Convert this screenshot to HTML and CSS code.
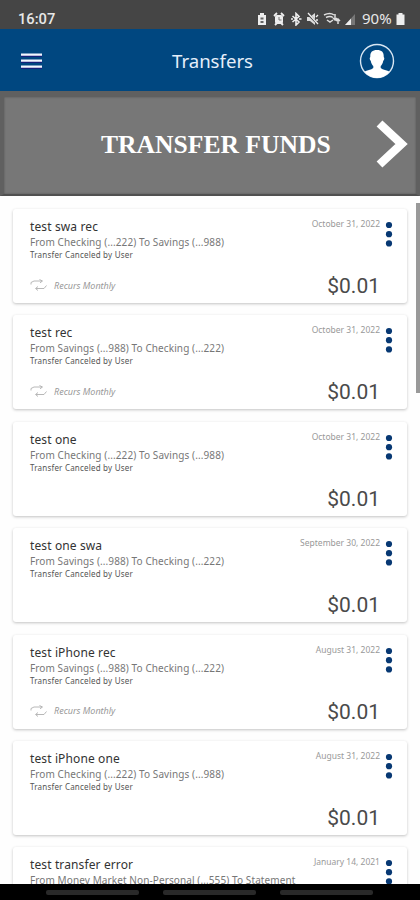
FILE: index.html
```
<!DOCTYPE html>
<html lang="en">
<head>
<meta charset="utf-8">
<title>Transfers</title>
<link rel="stylesheet" href="styles.css">
</head>
<body>
<svg class="defs" aria-hidden="true">
  <symbol id="recur" viewBox="0 0 18 12"><path d="M1 5.500V3.500L4 2h8M9.500 .5 12.500 2 10 3.800M16.500 6.500 14 9.500H6M8 7.500 5.500 9.500 8 11.500" fill="none" stroke="#b0b0b0" stroke-width=".9"/></symbol>
  <symbol id="dots" viewBox="0 0 8 26"><g fill="#073873"><circle cx="4" cy="4" r="3.100"/><circle cx="4" cy="13.200" r="3.100"/><circle cx="4" cy="22.400" r="3.100"/></g></symbol>
</svg>
<div class="screen">
  <div class="status">
    <span class="time">16:07</span>
    <svg class="status-icons" width="100" height="14" viewBox="0 0 100 14">
      <path d="M1 3h2V1h4v2h2v10H1z" fill="#eee"/><path d="M3.500 5.500h3v2h-3zM3.500 9h3v2h-3z" fill="#666"/>
      <rect x="18" y="3" width="8" height="9" rx="2" fill="#eee"/><path d="M17 4 20 1M27 4 24 1M18 13l2-2M26 13l-2-2" stroke="#eee" stroke-width="1.800"/><path d="M22 5v3h2.500" fill="none" stroke="#777"/>
      <path d="M35.500 4 42 10l-3 3V1.500L42 4.500 35.500 10M34 7h2M42 7h2.500" fill="none" stroke="#eee" stroke-width="1.600"/>
      <path d="M50 5h3l5-4v12l-5-4h-3z" fill="#ddd"/><path d="M50 1 61 12" stroke="#454545" stroke-width="2.400"/><path d="M51 1 61 12M59 5l2-2M59 8h2" stroke="#eee" stroke-width="1.300"/>
      <path d="M67 3q6-3 10 0M69 5.500q4-2 7 0M70 8l3 2 3-2M78 2v6M76 6l2 2 2-2M81 12V7M79 9l2-2 2 2" fill="none" stroke="#ddd" stroke-width="1.500"/>
      <path d="M88 13 98 2v11z" fill="#777"/><path d="M88 13l6-6.500V13z" fill="#eee"/>
    </svg>
    <span class="percent">90%</span>
    <svg class="battery" width="9" height="12" viewBox="0 0 9 12"><path d="M2.500 0h4v1.500H8.500V12H.5V1.500h2z" fill="#eee"/></svg>
  </div>
  <header class="header">
    <svg class="menu" width="21" height="16" viewBox="0 0 21 16"><path d="M0 3h21M0 9h21M0 15h21" stroke="#15207a" stroke-width="2"/><path d="M0 1.600h21M0 7.600h21M0 13.600h21" stroke="#f2f6ff" stroke-width="2.400"/></svg>
    <h1>Transfers</h1>
    <svg class="avatar" width="36" height="36" viewBox="0 0 36 36"><circle cx="18" cy="18" r="16.500" fill="none" stroke="#d8e6f2" stroke-width="1.400"/><path d="M18 7c5 0 7 2.500 6.700 7 1 1 .7 3-.5 4-.4 2.500-1.500 4-2.500 5v2c2 2 6.500 2 9 3.700A16 16 0 0 1 5.300 28.700c2.500-1.700 7-1.700 9-3.700v-2c-1-1-2.100-2.500-2.500-5-1.200-1-1.500-3-.5-4C11 9.500 13 7 18 7z" fill="#fff"/></svg>
  </header>
  <div class="banner">
    <span>TRANSFER FUNDS</span>
    <svg class="chevron" width="32" height="48" viewBox="0 0 32 48"><path d="M3.500 3.500 25.500 24 3.500 44.500" fill="none" stroke="#fff" stroke-width="8.500"/></svg>
  </div>
  <main class="list">
    <article class="card"><div class="info"><h2>test swa rec</h2><p class="route">From Checking (...222) To Savings (...988)</p><p class="state">Transfer Canceled by User</p><div class="recurs"><svg><use href="#recur"/></svg>Recurs Monthly</div></div><div class="side"><time>October 31, 2022</time><b>$0.01</b></div><svg class="more"><use href="#dots"/></svg></article>
    <article class="card"><div class="info"><h2>test rec</h2><p class="route">From Savings (...988) To Checking (...222)</p><p class="state">Transfer Canceled by User</p><div class="recurs"><svg><use href="#recur"/></svg>Recurs Monthly</div></div><div class="side"><time>October 31, 2022</time><b>$0.01</b></div><svg class="more"><use href="#dots"/></svg></article>
    <article class="card"><div class="info"><h2>test one</h2><p class="route">From Checking (...222) To Savings (...988)</p><p class="state">Transfer Canceled by User</p></div><div class="side"><time>October 31, 2022</time><b>$0.01</b></div><svg class="more"><use href="#dots"/></svg></article>
    <article class="card"><div class="info"><h2>test one swa</h2><p class="route">From Savings (...988) To Checking (...222)</p><p class="state">Transfer Canceled by User</p></div><div class="side"><time>September 30, 2022</time><b>$0.01</b></div><svg class="more"><use href="#dots"/></svg></article>
    <article class="card"><div class="info"><h2>test iPhone rec</h2><p class="route">From Savings (...988) To Checking (...222)</p><p class="state">Transfer Canceled by User</p><div class="recurs"><svg><use href="#recur"/></svg>Recurs Monthly</div></div><div class="side"><time>August 31, 2022</time><b>$0.01</b></div><svg class="more"><use href="#dots"/></svg></article>
    <article class="card"><div class="info"><h2>test iPhone one</h2><p class="route">From Checking (...222) To Savings (...988)</p><p class="state">Transfer Canceled by User</p></div><div class="side"><time>August 31, 2022</time><b>$0.01</b></div><svg class="more"><use href="#dots"/></svg></article>
    <article class="card"><div class="info"><h2>test transfer error</h2><p class="route">From Money Market Non-Personal (...555) To Statement</p></div><div class="side"><time>January 14, 2021</time></div><svg class="more"><use href="#dots"/></svg></article>
    <div class="scrollbar"></div>
  </main>
  <nav class="navbar"><i></i><i></i><i></i></nav>
</div>
</body>
</html>
```
FILE: styles.css
```
* { box-sizing: border-box; }
body, h1, h2, p { margin: 0; }
body { font-family: "Noto Sans", sans-serif; background: #fff; overflow: hidden; }
.defs { display: none; }
.screen { width: 420px; height: 900px; display: flex; flex-direction: column; overflow: hidden; }
.status { height: 29px; flex: none; background: #454545; color: #e8e8e8; display: flex; align-items: center; padding: 8px 15px 0 18px; }
.time { font: 500 14.700px/20px Roboto, sans-serif; }
.status-icons { margin-left: auto; }
.percent { font: 15px/20px "Noto Sans", sans-serif; margin-left: 5px; letter-spacing: 0; width: 31px; white-space: nowrap; padding-bottom: 2px; }
.battery { margin-left: 3px; }
.header { height: 62px; flex: none; background: #004780; color: #e4eefa; display: grid; grid-template-columns: 60px 1fr 60px; align-items: center; padding: 2px 5px 0 0; }
.menu { margin-left: 21px; }
.header h1 { font: 400 18.600px/28px "Noto Sans", sans-serif; text-align: center; padding-left: 10px; }
.avatar { margin-left: 4px; }
.banner { height: 105px; flex: none; background: #777; border: 4px solid #606060; border-top-width: 6px; border-bottom: 2px solid #505050; box-shadow: inset 0 0 2px #505050; display: flex; align-items: center; padding: 0 0 3px 97px; color: #fff; font: 700 25.600px/30px "Liberation Serif", serif; white-space: nowrap; }
.banner span { width: 230px; padding-top: 2px; }
.chevron { margin-left: 45px; }
.list { position: relative; flex: 1; min-height: 0; overflow: hidden; padding: 13px 13px 0; display: flex; flex-direction: column; gap: 12.400px; background: #fefefe; }
.card { height: 94px; flex: none; border-radius: 3px; background: #fff; box-shadow: 0 1px 3px rgba(0,0,0,.24); display: flex; padding: 8px 14px 0 17px; }
.info { width: 200px; flex: none; white-space: nowrap; }
.card h2 { font-size: 12px; line-height: 18px; font-weight: 400; letter-spacing: .12px; color: #333; }
.route { font-size: 10px; line-height: 14px; letter-spacing: .1px; color: #777; }
.state { font-size: 8px; line-height: 12px; letter-spacing: .2px; color: #555; }
.recurs { display: flex; align-items: center; gap: 6px; margin-top: 17px; height: 14px; font-size: 9px; font-style: italic; color: #999; }
.recurs svg { width: 18px; height: 12px; }
.side { flex: 1; display: flex; flex-direction: column; align-items: flex-end; }
.side time { font-size: 8.500px; line-height: 13px; color: #999; }
.side b { font: 400 21px/28px Roboto, sans-serif; color: #4a4a4a; margin-top: 42px; }
.more { width: 8px; height: 26px; margin: 4px 0 0 5px; }
.scrollbar { position: absolute; right: 0; top: 7px; width: 4px; height: 190px; background: #999; }
.navbar { height: 16px; flex: none; background: #000; display: flex; gap: 24px; padding: 6px 0 0 46px; }
.navbar i { width: 93px; height: 5px; border-radius: 2px; background: #292929; }
.card h2 { padding-top: 1px; height: 18px; }
```
